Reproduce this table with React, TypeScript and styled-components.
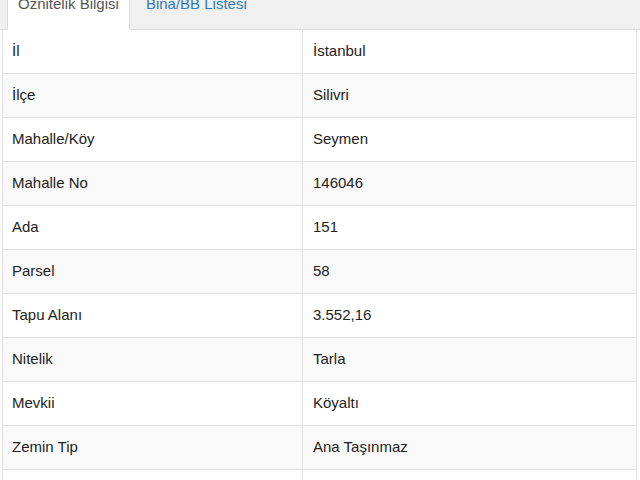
import React from "react";
import styled, { createGlobalStyle } from "styled-components";

const Global = createGlobalStyle`
  html, body { margin: 0; padding: 0; background: #ffffff; }
  body { font-family: "Liberation Sans", Arial, sans-serif; color: #333; overflow: hidden; }
`;

const Page = styled.div`
  width: 640px;
  height: 480px;
  overflow: hidden;
`;

const TabBar = styled.ul`
  display: flex;
  margin: -12px 0 0 0;
  padding: 0 0 0 7px;
  list-style: none;
  background: #f0f0f0;
  border-bottom: 1px solid #dcdcdc;
  height: 42px;
  box-sizing: border-box;
`;

const Tab = styled.li<{ $active?: boolean }>`
  margin-right: 5px;
  margin-bottom: -1px;
  padding: 0 10px 12px;
  height: 42px;
  box-sizing: border-box;
  display: flex;
  align-items: center;
  font-size: 15px;
  color: ${(p) => (p.$active ? "#555" : "#337ab7")};
  background: ${(p) => (p.$active ? "#fff" : "transparent")};
  border: 1px solid ${(p) => (p.$active ? "#dcdcdc" : "transparent")};
  border-bottom-color: transparent;
  border-radius: 4px 4px 0 0;
`;

const Table = styled.table`
  margin: 0 3px 0 2px;
  width: 635px;
  border-collapse: collapse;
  border-left: 1px solid #e2e2e2;
  border-right: 1px solid #e2e2e2;
  font-size: 15px;
`;

const Row = styled.tr<{ $striped?: boolean }>`
  background: ${(p) => (p.$striped ? "#f9f9f9" : "#fff")};
`;

const Cell = styled.td<{ $first?: boolean }>`
  height: 41px;
  padding: 0 10px 2px ${(p) => (p.$first ? "9px" : "10px")};
  border-bottom: 1px solid #e2e2e2;
  border-right: ${(p) => (p.$first ? "1px solid #e2e2e2" : "none")};
  width: ${(p) => (p.$first ? "280px" : "auto")};
  vertical-align: middle;
  color: #222;
`;

const rows: [string, string][] = [
  ["İl", "İstanbul"],
  ["İlçe", "Silivri"],
  ["Mahalle/Köy", "Seymen"],
  ["Mahalle No", "146046"],
  ["Ada", "151"],
  ["Parsel", "58"],
  ["Tapu Alanı", "3.552,16"],
  ["Nitelik", "Tarla"],
  ["Mevkii", "Köyaltı"],
  ["Zemin Tip", "Ana Taşınmaz"],
  ["", ""],
];

export default function App() {
  return (
    <Page>
      <Global />
      <TabBar>
        <Tab $active>Öznitelik Bilgisi</Tab>
        <Tab>Bina/BB Listesi</Tab>
      </TabBar>
      <Table>
        <tbody>
          {rows.map(([k, v], i) => (
            <Row key={i} $striped={i % 2 === 1}>
              <Cell $first>{k}</Cell>
              <Cell>{v}</Cell>
            </Row>
          ))}
        </tbody>
      </Table>
    </Page>
  );
}
